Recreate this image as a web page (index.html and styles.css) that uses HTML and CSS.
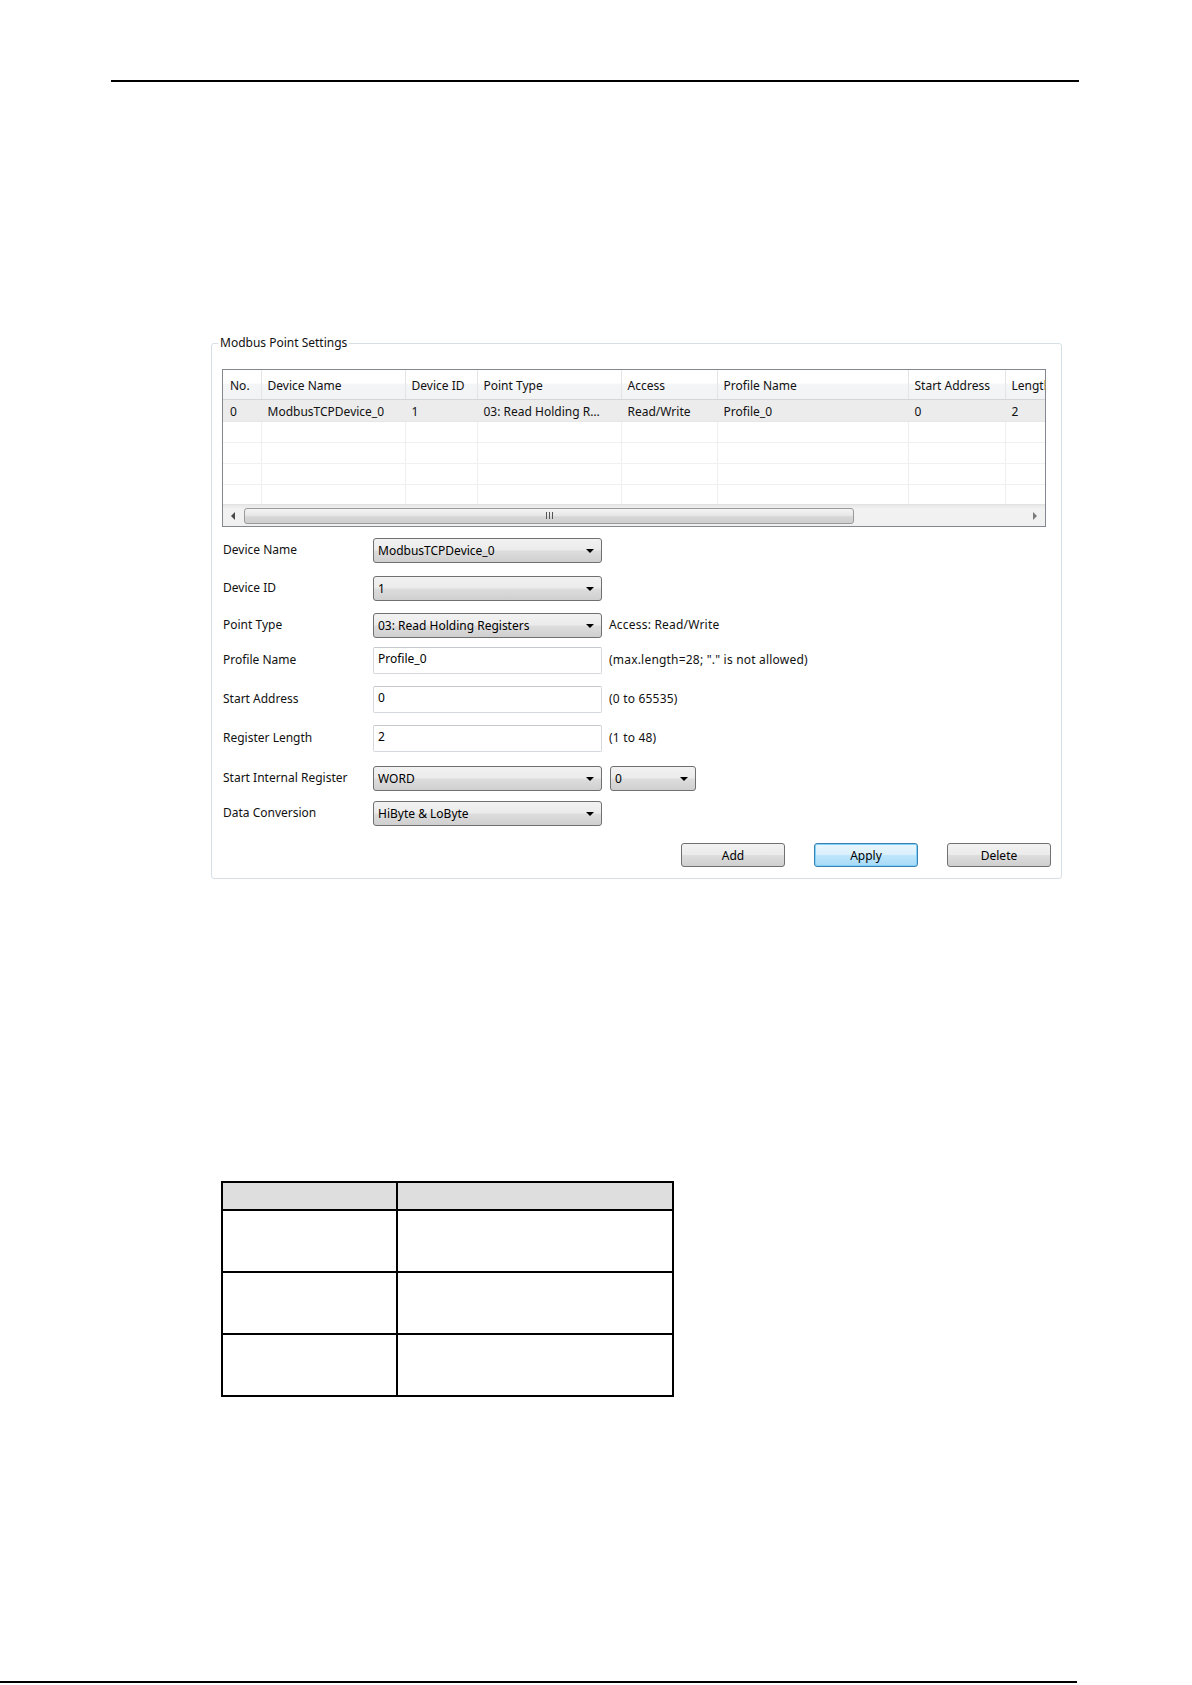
FILE: index.html
```html
<!DOCTYPE html>
<html lang="en">
<head>
    <meta charset="UTF-8">
    <meta name="viewport" content="width=device-width, initial-scale=1.0">
    <title>Modbus Point Settings</title>
    <link rel="stylesheet" href="styles.css">
</head>
<body>
    <div class="page">
        <div class="rule-top"></div>

        <!-- Modbus Point Settings group -->
        <div class="groupbox">
            <span class="legend">Modbus Point Settings</span>

            <div class="grid">
                <div class="grid-view">
                    <table class="points">
                        <colgroup>
                            <col class="c-no"><col class="c-name"><col class="c-id"><col class="c-type">
                            <col class="c-access"><col class="c-profile"><col class="c-addr"><col class="c-len">
                        </colgroup>
                        <thead>
                            <tr>
                                <th>No.</th><th>Device Name</th><th>Device ID</th><th>Point Type</th>
                                <th>Access</th><th>Profile Name</th><th>Start Address</th><th>Length</th>
                            </tr>
                        </thead>
                        <tbody>
                            <tr class="selected">
                                <td>0</td><td>ModbusTCPDevice_0</td><td>1</td><td>03: Read Holding R…</td>
                                <td>Read/Write</td><td>Profile_0</td><td>0</td><td>2</td>
                            </tr>
                            <tr><td></td><td></td><td></td><td></td><td></td><td></td><td></td><td></td></tr>
                            <tr><td></td><td></td><td></td><td></td><td></td><td></td><td></td><td></td></tr>
                            <tr><td></td><td></td><td></td><td></td><td></td><td></td><td></td><td></td></tr>
                            <tr><td></td><td></td><td></td><td></td><td></td><td></td><td></td><td></td></tr>
                        </tbody>
                    </table>
                </div>
                <div class="hscroll">
                    <span class="scroll-arrow left"></span>
                    <div class="scroll-track">
                        <div class="scroll-thumb"><span class="grip"></span></div>
                    </div>
                    <span class="scroll-arrow right"></span>
                </div>
            </div>

            <div class="form">
                <div class="row r1">
                    <label>Device Name</label>
                    <div class="combo"><span>ModbusTCPDevice_0</span><i class="caret"></i></div>
                </div>
                <div class="row r2">
                    <label>Device ID</label>
                    <div class="combo"><span>1</span><i class="caret"></i></div>
                </div>
                <div class="row r3">
                    <label>Point Type</label>
                    <div class="combo"><span>03: Read Holding Registers</span><i class="caret"></i></div>
                    <span class="hint">Access: Read/Write</span>
                </div>
                <div class="row r4">
                    <label>Profile Name</label>
                    <div class="textbox">Profile_0</div>
                    <span class="hint">(max.length=28; "." is not allowed)</span>
                </div>
                <div class="row r5">
                    <label>Start Address</label>
                    <div class="textbox">0</div>
                    <span class="hint">(0 to 65535)</span>
                </div>
                <div class="row r6">
                    <label>Register Length</label>
                    <div class="textbox">2</div>
                    <span class="hint">(1 to 48)</span>
                </div>
                <div class="row r7">
                    <label>Start Internal Register</label>
                    <div class="combo"><span>WORD</span><i class="caret"></i></div>
                    <div class="combo small"><span>0</span><i class="caret"></i></div>
                </div>
                <div class="row r8">
                    <label>Data Conversion</label>
                    <div class="combo"><span>HiByte &amp; LoByte</span><i class="caret"></i></div>
                </div>
            </div>

            <div class="buttons">
                <button class="btn">Add</button>
                <button class="btn default">Apply</button>
                <button class="btn">Delete</button>
            </div>
        </div>

        <table class="doc-table">
            <tr class="head"><th></th><th></th></tr>
            <tr><td></td><td></td></tr>
            <tr><td></td><td></td></tr>
            <tr><td></td><td></td></tr>
        </table>

        <div class="rule-bottom"></div>
    </div>
</body>
</html>
```
FILE: styles.css
```css
body {
    margin: 0;
    padding: 0;
    background: #fff;
    font-family: "Noto Sans", "DejaVu Sans", sans-serif;
    font-size: 12px;
    color: #111;
}
.page {
    width: 1192px;
    height: 1685px;
    overflow: hidden;
}
.rule-top {
    margin: 80px 0 0 111px;
    width: 968px;
    height: 2px;
    background: #000;
}
.rule-bottom {
    margin-top: 284px;
    width: 1077px;
    height: 2px;
    background: #000;
}

/* group box */
.groupbox {
    position: relative;
    box-sizing: border-box;
    margin: 261px 0 0 211px;
    width: 851px;
    height: 536px;
    padding: 25px 10px 0 10px;
    border: 1px solid #d5dfe5;
    border-radius: 3px;
}
.legend {
    position: absolute;
    top: -10px;
    left: 6px;
    padding: 0 2px;
    background: #fff;
    line-height: 18px;
}

/* list view */
.grid {
    box-sizing: border-box;
    width: 824px;
    height: 158px;
    border: 1px solid #828790;
    display: flex;
    flex-direction: column;
}
.grid-view {
    flex: 1;
    overflow: hidden;
}
.points {
    border-collapse: collapse;
    table-layout: fixed;
    width: 842px;
}
.c-no { width: 38px; }
.c-name { width: 144px; }
.c-id { width: 72px; }
.c-type { width: 144px; }
.c-access { width: 96px; }
.c-profile { width: 191px; }
.c-addr { width: 97px; }
.c-len { width: 60px; }
.points th {
    height: 27px;
    padding: 2px 0 0 6px;
    text-align: left;
    font-weight: normal;
    white-space: nowrap;
    overflow: hidden;
    background: linear-gradient(#fff 0%, #fff 45%, #f4f5f7 50%, #f2f3f5 100%);
    border-right: 1px solid #e3e5e8;
    border-bottom: 1px solid #d5d5d5;
}
.points th:first-child, .points td:first-child { padding-left: 7px; }
.points td {
    height: 20px;
    padding: 0 0 0 6px;
    white-space: nowrap;
    overflow: hidden;
    border-right: 1px solid #eeeeee;
    border-bottom: 1px solid #f0f0f0;
}
.points tr.selected td {
    background: #ececec;
    border-right-color: #ececec;
    border-bottom-color: #e6e6e6;
    padding-top: 1px;
}

/* horizontal scrollbar */
.hscroll {
    height: 21px;
    display: flex;
    align-items: center;
    background: linear-gradient(#e8e8e8, #f2f2f2 20%, #f0f0f0);
    border-top: 1px solid #e2e2e2;
}
.scroll-arrow {
    width: 0;
    height: 0;
    border-top: 4px solid transparent;
    border-bottom: 4px solid transparent;
}
.scroll-arrow.left {
    margin: 0 9px 0 8px;
    border-right: 4px solid #4a4a4a;
}
.scroll-arrow.right {
    margin: 0 8px 0 0;
    border-left: 4px solid #7a7a7a;
}
.scroll-track {
    flex: 1;
    height: 16px;
    display: flex;
    align-items: center;
}
.scroll-thumb {
    box-sizing: border-box;
    width: 610px;
    height: 16px;
    border: 1px solid #9a9a9a;
    border-radius: 3px;
    background: linear-gradient(#f4f4f4, #e6e6e6 50%, #d6d6d6 55%, #d0d0d0);
    display: flex;
    justify-content: center;
    align-items: center;
}
.grip {
    width: 7px;
    height: 7px;
    background: repeating-linear-gradient(90deg, #555 0 1px, transparent 1px 3px);
}

/* form */
.form {
    margin-top: 11px;
}
.row {
    display: flex;
    align-items: flex-start;
}
.row label {
    width: 150px;
    flex: none;
    padding-left: 1px;
    line-height: 24px;
}
.r1 { height: 38px; }
.r2 { height: 37px; }
.r3 { height: 34px; }
.r4 { height: 39px; }
.r5 { height: 39px; }
.r6 { height: 41px; }
.r7 { height: 35px; }
.r8 { height: 42px; }
.r4 label, .r5 label, .r6 label { line-height: 26px; }
.combo {
    box-sizing: border-box;
    width: 229px;
    height: 25px;
    border: 1px solid #707070;
    border-radius: 3px;
    background: linear-gradient(#f2f2f2, #ebebeb 48%, #dddddd 52%, #cfcfcf);
    display: flex;
    align-items: center;
    justify-content: space-between;
    padding: 0 7px 0 4px;
    color: #000;
}
.combo.small {
    width: 86px;
    margin-left: 8px;
}
.caret {
    width: 0;
    height: 0;
    border-left: 4px solid transparent;
    border-right: 4px solid transparent;
    border-top: 4px solid #000;
}
.textbox {
    box-sizing: border-box;
    width: 229px;
    height: 27px;
    border: 1px solid #d5d8dc;
    border-top-color: #c4c8cc;
    border-radius: 2px;
    padding: 2px 4px;
    line-height: 18px;
    color: #000;
}
.hint {
    margin-left: 7px;
    line-height: 24px;
    letter-spacing: 0.2px;
}
.r4 .hint, .r5 .hint, .r6 .hint { line-height: 26px; }

/* buttons */
.buttons {
    display: flex;
    justify-content: flex-end;
    gap: 29px;
}
.btn {
    box-sizing: border-box;
    width: 104px;
    height: 24px;
    padding: 0;
    font-family: inherit;
    font-size: 12px;
    color: #000;
    border: 1px solid #707070;
    border-radius: 3px;
    background: linear-gradient(#f2f2f2, #ebebeb 48%, #dddddd 52%, #cfcfcf);
}
.btn.default {
    border-color: #3c7fb1;
    background: linear-gradient(#eaf6fd, #d9f0fc 48%, #bee6fd 52%, #a7d9f5);
    box-shadow: inset 0 0 0 1px #7fd3f9;
}

/* document table */
.doc-table {
    margin: 302px 0 0 221px;
    width: 453px;
    border-collapse: collapse;
}
.doc-table th, .doc-table td {
    border: 2px solid #000;
    padding: 0;
}
.doc-table th:first-child, .doc-table td:first-child { width: 173px; }
.doc-table .head th {
    height: 26px;
    background: #dedede;
}
.doc-table td { height: 60px; }
```
